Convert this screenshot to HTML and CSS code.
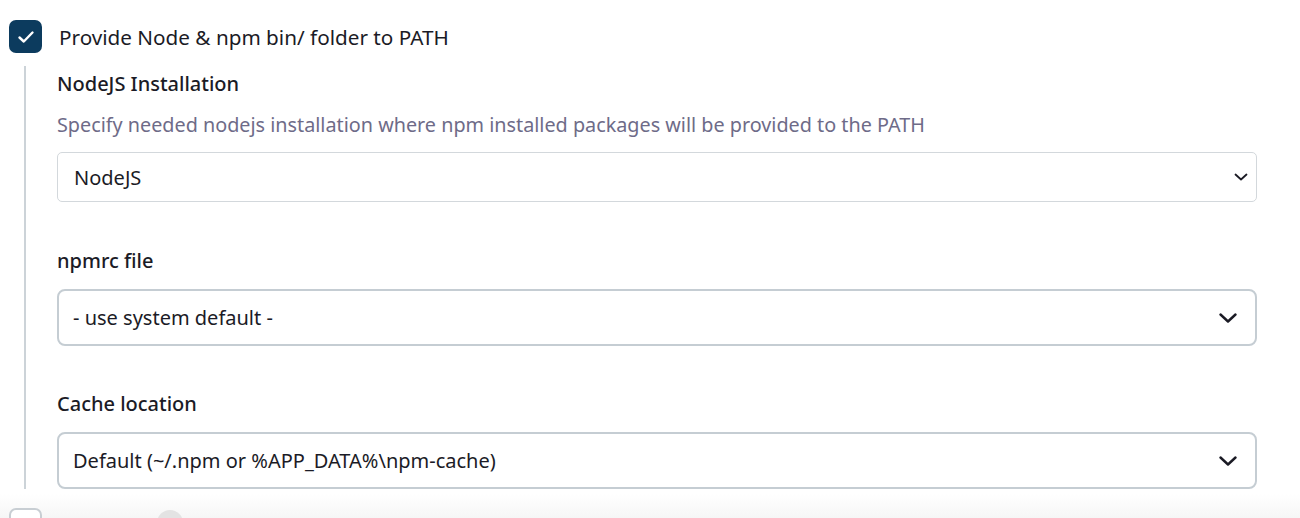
FILE: index.html
```html
<!DOCTYPE html>
<html lang="en">
<head>
<meta charset="utf-8">
<title>NodeJS config</title>
<link rel="stylesheet" href="styles.css">
</head>
<body>
<div class="page">
  <div class="check-row">
    <span class="checkbox checked">
      <svg viewBox="0 0 18 18" width="18" height="18"><path d="M2.5 9.5 L6.8 13.5 L15.5 4.5" fill="none" stroke="#fff" stroke-width="2.4" stroke-linecap="round" stroke-linejoin="round"/></svg>
    </span>
    <span class="check-label">Provide Node &amp; npm bin/ folder to PATH</span>
  </div>
  <div class="nested">
    <div class="field">
      <div class="label">NodeJS Installation</div>
      <div class="desc">Specify needed nodejs installation where npm installed packages will be provided to the PATH</div>
      <div class="select thin">
        <span>NodeJS</span>
        <svg class="chev" viewBox="0 0 14 8" width="14" height="8"><path d="M1.5 1.5 L7 6.5 L12.5 1.5" fill="none" stroke="#1a1a24" stroke-width="1.8" stroke-linecap="round" stroke-linejoin="round"/></svg>
      </div>
    </div>
    <div class="field mid">
      <div class="label">npmrc file</div>
      <div class="select">
        <span>- use system default -</span>
        <svg class="chev big" viewBox="0 0 18 10" width="18" height="10"><path d="M1.5 1.5 L9 8.5 L16.5 1.5" fill="none" stroke="#1a1a24" stroke-width="2.4" stroke-linecap="round" stroke-linejoin="round"/></svg>
      </div>
    </div>
    <div class="field last">
      <div class="label">Cache location</div>
      <div class="select">
        <span>Default (~/.npm or %APP_DATA%\npm-cache)</span>
        <svg class="chev big" viewBox="0 0 18 10" width="18" height="10"><path d="M1.5 1.5 L9 8.5 L16.5 1.5" fill="none" stroke="#1a1a24" stroke-width="2.4" stroke-linecap="round" stroke-linejoin="round"/></svg>
      </div>
    </div>
  </div>
  <div class="footer">
    <span class="checkbox empty"></span>
    <span class="dot"></span>
  </div>
</div>
</body>
</html>
```

FILE: styles.css
```css
html, body {
  margin: 0;
  padding: 0;
  background: #fff;
  overflow: hidden;
}
body {
  font-family: "Noto Sans", "Open Sans", sans-serif;
  color: #1b1b26;
}
.page {
  padding-top: 20px;
}
.check-row {
  display: flex;
  align-items: center;
  gap: 17px;
  padding-left: 9px;
  height: 33px;
}
.checkbox {
  width: 33px;
  height: 33px;
  box-sizing: border-box;
  border-radius: 7px;
  display: flex;
  align-items: center;
  justify-content: center;
  flex-shrink: 0;
}
.checkbox.checked {
  background: #0c3b5e;
}
.checkbox.empty {
  border: 2px solid #c8ced3;
  background: #fff;
}
.check-label {
  font-size: 20.7px;
  font-weight: 400;
  color: #1b1b26;
}
.nested {
  margin-left: 24px;
  margin-top: 13px;
  border-left: 2px solid #ccd3d8;
  padding-left: 31px;
  padding-top: 5px;
  margin-right: 43px;
}
.field {
  padding-bottom: 46px;
}
.field.mid {
  padding-bottom: 45px;
}
.field.last {
  padding-bottom: 0;
}
.label {
  font-size: 20px;
  font-weight: 500;
  line-height: 26px;
  margin-bottom: 15px;
  color: #1b1b26;
}
.desc {
  font-size: 19.8px;
  line-height: 26px;
  color: #6e6b88;
  margin-bottom: 14px;
}
.select {
  display: flex;
  align-items: center;
  justify-content: space-between;
  box-sizing: border-box;
  height: 57px;
  border: 2px solid #c5cdd3;
  border-radius: 8px;
  padding: 0 18px 0 14px;
  font-size: 20px;
  color: #1b1b26;
  background: #fff;
}
.select.thin {
  height: 50px;
  border: 1px solid #d3d8dc;
  border-radius: 5px;
  padding: 0 8px 0 16px;
}
.chev {
  flex-shrink: 0;
}
.footer {
  margin-top: 5px;
  height: 40px;
  background: linear-gradient(to bottom, #ffffff 0%, #f6f6f6 60%, #f4f4f4 100%);
  display: flex;
  align-items: flex-start;
  padding-top: 14px;
  padding-left: 9px;
  box-sizing: border-box;
}
.dot {
  width: 26px;
  height: 26px;
  border-radius: 50%;
  background: #e3e3e3;
  margin-left: 115px;
  margin-top: 2px;
}
```
